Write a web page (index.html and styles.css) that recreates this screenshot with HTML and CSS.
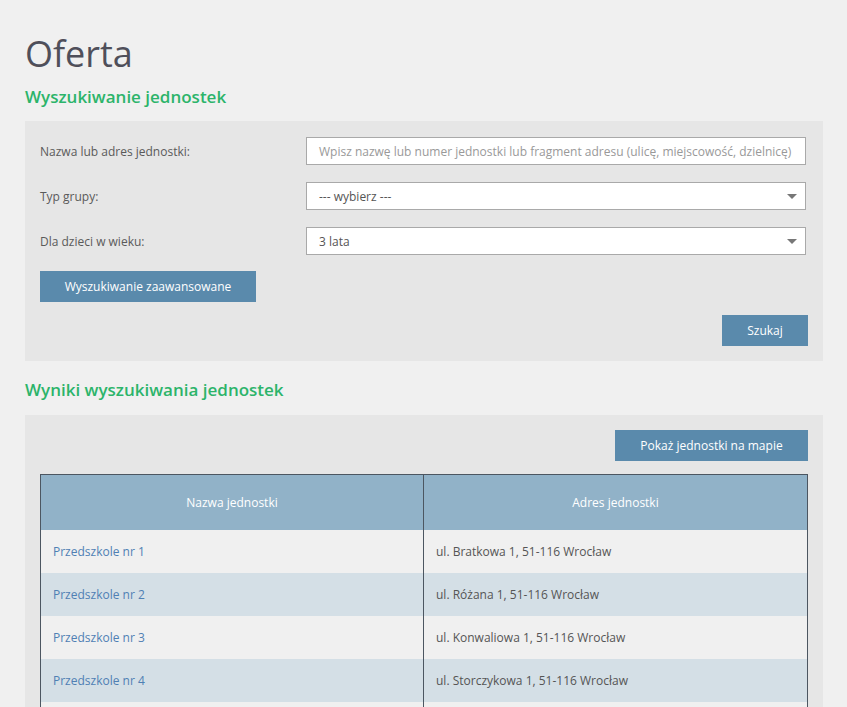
FILE: index.html
```html
<!DOCTYPE html>
<html lang="pl">
<head>
<meta charset="utf-8">
<title>Oferta</title>
<link rel="stylesheet" href="styles.css">
</head>
<body>
<main class="page">
  <h1 class="title">Oferta</h1>
  <h2 class="section-title">Wyszukiwanie jednostek</h2>
  <section class="panel search">
    <div class="form-row">
      <label class="label">Nazwa lub adres jednostki:</label>
      <div class="field"><span class="placeholder">Wpisz nazwę lub numer jednostki lub fragment adresu (ulicę, miejscowość, dzielnicę)</span></div>
    </div>
    <div class="form-row">
      <label class="label">Typ grupy:</label>
      <div class="field select"><span>--- wybierz ---</span><span class="arrow"></span></div>
    </div>
    <div class="form-row">
      <label class="label">Dla dzieci w wieku:</label>
      <div class="field select"><span>3 lata</span><span class="arrow"></span></div>
    </div>
    <div class="btn-row left"><button class="btn wide">Wyszukiwanie zaawansowane</button></div>
    <div class="btn-row right"><button class="btn small">Szukaj</button></div>
  </section>
  <h2 class="section-title second">Wyniki wyszukiwania jednostek</h2>
  <section class="panel results">
    <div class="btn-row right top"><button class="btn map">Pokaż jednostki na mapie</button></div>
    <table class="grid">
      <thead>
        <tr><th class="c1">Nazwa jednostki</th><th>Adres jednostki</th></tr>
      </thead>
      <tbody>
        <tr><td class="c1"><a href="#">Przedszkole nr 1</a></td><td>ul. Bratkowa 1, 51-116 Wrocław</td></tr>
        <tr class="alt"><td class="c1"><a href="#">Przedszkole nr 2</a></td><td>ul. Różana 1, 51-116 Wrocław</td></tr>
        <tr><td class="c1"><a href="#">Przedszkole nr 3</a></td><td>ul. Konwaliowa 1, 51-116 Wrocław</td></tr>
        <tr class="alt"><td class="c1"><a href="#">Przedszkole nr 4</a></td><td>ul. Storczykowa 1, 51-116 Wrocław</td></tr>
        <tr><td class="c1"></td><td></td></tr>
      </tbody>
    </table>
  </section>
</main>
</body>
</html>
```
FILE: styles.css
```css
* { box-sizing: border-box; }
html, body { margin: 0; padding: 0; }
body {
  background: #f0f0f0;
  font-family: "Open Sans", "Noto Sans", sans-serif;
  color: #555;
  overflow: hidden;
  height: 707px;
}
.page { padding: 0 24px 0 25px; }
.title {
  margin: 0;
  padding-top: 31px;
  font-size: 36px;
  line-height: 46px;
  font-weight: 400;
  color: #4f4f5a;
}
.section-title {
  margin: 8px 0 0;
  font-size: 17px;
  line-height: 24px;
  font-weight: 600;
  color: #2cb46a;
}
.section-title.second { margin-top: 17px; }
.panel {
  background: #e6e6e6;
  padding: 16px 15px 15px;
  margin-top: 12px;
}
.form-row {
  display: flex;
  align-items: center;
  height: 28px;
  margin-bottom: 17px;
}
.label {
  width: 266px;
  font-size: 12px;
  color: #5a5a5a;
}
.field {
  flex: 1;
  margin-right: 2px;
  height: 28px;
  background: #fff;
  border: 1px solid #a9a9a9;
  display: flex;
  align-items: center;
  padding: 0 12px;
  font-size: 12px;
  color: #555;
  justify-content: space-between;
}
.placeholder { color: #999; white-space: nowrap; }
.arrow {
  width: 0; height: 0;
  border-left: 5px solid transparent;
  border-right: 5px solid transparent;
  border-top: 5px solid #777;
  margin-right: -4px;
}
.form-row:nth-of-type(3) { margin-bottom: 16px; }
.btn-row { display: flex; }
.btn-row.right { justify-content: flex-end; }
.btn-row.left { margin-bottom: 13px; }
.btn-row.top { margin-bottom: 13px; }
.btn {
  background: #5a8aac;
  color: #fff;
  border: 0;
  height: 31px;
  font-family: inherit;
  font-size: 12px;
  padding: 0;
}
.btn.wide { width: 216px; }
.btn.small { width: 86px; }
.btn.map { width: 193px; }
.results { margin-top: 13px; padding-top: 15px; padding-bottom: 0; height: 292px; overflow: hidden; }
.grid {
  width: 100%;
  border-collapse: collapse;
  border: 1px solid #4c5661;
  font-size: 12px;
}
.grid th {
  background: #91b2c8;
  color: #fff;
  font-weight: 400;
  height: 55px;
  text-align: center;
}
.grid th.c1, .grid td.c1 { width: 383px; border-right: 1px solid #4c5661; }
.grid td {
  height: 43px;
  padding: 0 12px;
  background: #f0f0f0;
  color: #555;
}
.grid tr.alt td { background: #d4dfe6; }
.grid a { color: #4f80b4; text-decoration: none; }
```
